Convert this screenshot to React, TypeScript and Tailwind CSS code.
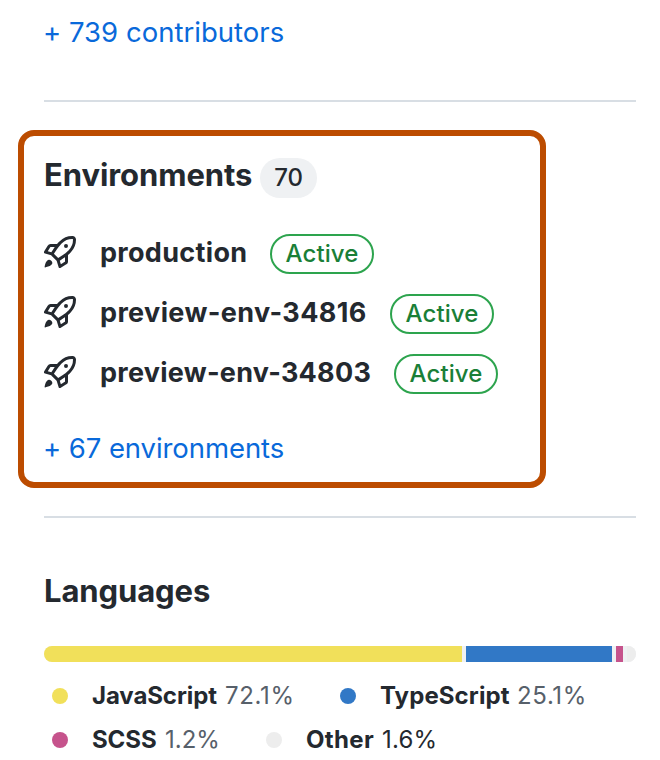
const environments = [
  { name: 'production', width: 'w-[146px]', tracking: 'tracking-[0.32px]' },
  { name: 'preview-env-34816', width: 'w-[266px]', tracking: 'tracking-[0.38px]' },
  { name: 'preview-env-34803', width: 'w-[270px]', tracking: 'tracking-[0.26px]' },
];

const languages = [
  [
    { name: 'JavaScript', share: '72.1%', dot: 'bg-[#f1e05a]', item: 'w-[288px]', label: 'w-[133px] tracking-[-0.1px]', value: 'tracking-[0.65px] text-[#57606a]' },
    { name: 'TypeScript', share: '25.1%', dot: 'bg-[#3178c6]', item: 'w-[260px]', label: 'w-[137px] tracking-[0.1px]', value: 'tracking-[0.65px] text-[#57606a]' },
  ],
  [
    { name: 'SCSS', share: '1.2%', dot: 'bg-[#c6538c]', item: 'w-[214px]', label: 'w-[73px] tracking-[-0.1px]', value: 'text-[#57606a]' },
    { name: 'Other', share: '1.6%', dot: 'bg-[#ededed]', item: 'w-[240px]', label: 'w-[76px] tracking-[0.35px]', value: 'tracking-[0.2px] text-[#24292f]' },
  ],
];

function Rocket() {
  return (
    <svg viewBox="0 0 16 16" fill="currentColor" className="size-8 shrink-0">
      <path d="M14.064 0h.186C15.216 0 16 .784 16 1.75v.186a8.752 8.752 0 0 1-2.564 6.186l-.458.459c-.314.314-.641.616-.979.904v3.207c0 .608-.315 1.172-.833 1.49l-2.774 1.707a.749.749 0 0 1-1.11-.418l-.954-3.102a1.214 1.214 0 0 1-.145-.125L3.754 9.816a1.218 1.218 0 0 1-.124-.145L.528 8.717a.749.749 0 0 1-.418-1.11l1.71-2.774A1.748 1.748 0 0 1 3.31 4h3.204c.288-.338.59-.665.904-.979l.459-.458A8.749 8.749 0 0 1 14.064 0ZM8.938 3.623h-.002l-.458.458c-.76.76-1.437 1.598-2.02 2.5l-1.5 2.317 2.143 2.143 2.317-1.5c.902-.583 1.74-1.26 2.499-2.02l.459-.458a7.25 7.25 0 0 0 2.123-5.127V1.75a.25.25 0 0 0-.25-.25h-.186a7.249 7.249 0 0 0-5.125 2.123ZM3.56 14.56c-.732.732-2.334 1.045-3.005 1.148a.234.234 0 0 1-.201-.064.234.234 0 0 1-.064-.201c.103-.671.416-2.273 1.15-3.003a1.502 1.502 0 1 1 2.12 2.12Zm6.94-3.935c-.088.06-.177.118-.266.175l-2.35 1.521.548 1.783 1.949-1.2a.25.25 0 0 0 .119-.213ZM3.678 8.116 5.2 5.766c.058-.09.117-.178.176-.266H3.309a.25.25 0 0 0-.213.119l-1.2 1.95ZM12 5a1 1 0 1 1-2 0 1 1 0 0 1 2 0Z" />
    </svg>
  );
}

export default function App() {
  return (
    <main className="h-[760px] w-[660px] overflow-hidden bg-white pl-[18px] font-['Inter',sans-serif] text-[28px] text-[#24292f]">
      <a className="ml-[25px] block h-[100px] pt-3 text-[27.5px] leading-10 tracking-[0.02px] text-[#0969da]">+ 739 contributors</a>
      <hr className="ml-[26px] w-[592px] border-t-2 border-[#d8dee4]" />
      <section className="mt-7 h-[358px] w-[528px] rounded-[16px] border-[6px] border-[#bc4c00] px-5">
        <h2 className="flex h-[86px] items-start text-[31px] font-bold leading-10">
          <span className="w-[216px] pt-[19px] tracking-[-0.08px]">Environments</span>
          <span className="mt-[22px] flex h-10 w-[57px] items-center justify-center rounded-full bg-[#eff1f3] text-2xl font-medium tracking-[-0.2px]">70</span>
        </h2>
        {environments.map((e) => (
          <div key={e.name} className="flex h-[60px] items-center">
            <Rocket />
            <span className={`ml-6 mr-6 pt-0.5 text-[27px] font-bold whitespace-nowrap ${e.width} ${e.tracking}`}>{e.name}</span>
            <span className="mt-1 flex h-10 w-26 items-center justify-center rounded-full border-2 border-[#2da44e] text-2xl font-medium tracking-[0.1px] text-[#1a7f37]">Active</span>
          </div>
        ))}
        <a className="-ml-px mt-[26px] block text-[27.5px] leading-10 tracking-[-0.08px] text-[#0969da]">+ 67 environments</a>
      </section>
      <hr className="mt-7 ml-[26px] w-[592px] border-t-2 border-[#d8dee4]" />
      <section className="ml-[26px] pt-[53px]">
        <h2 className="text-[31px] font-bold leading-10 tracking-[-0.1px]">Languages</h2>
        <div className="mt-[35px] flex h-4 w-[592px] gap-1 overflow-hidden rounded-full bg-[#eff1f3]">
          <i className="w-[418px] bg-[#f1e05a]" />
          <i className="w-[146px] bg-[#3178c6]" />
          <i className="w-[7px] bg-[#c6538c]" />
          <i className="flex-1 bg-[#ededed]" />
        </div>
        <div className="pt-3 text-2xl">
          {languages.map((row) => (
            <div key={row[0].name} className="flex h-11 items-center">
              {row.map((l) => (
                <div key={l.name} className={`flex items-center whitespace-nowrap pl-2 ${l.item}`}>
                  <i className={`mr-6 size-4 shrink-0 rounded-full ${l.dot}`} />
                  <span className={`shrink-0 font-bold ${l.label}`}>{l.name}</span>
                  <span className={l.value}>{l.share}</span>
                </div>
              ))}
            </div>
          ))}
        </div>
      </section>
    </main>
  );
}
